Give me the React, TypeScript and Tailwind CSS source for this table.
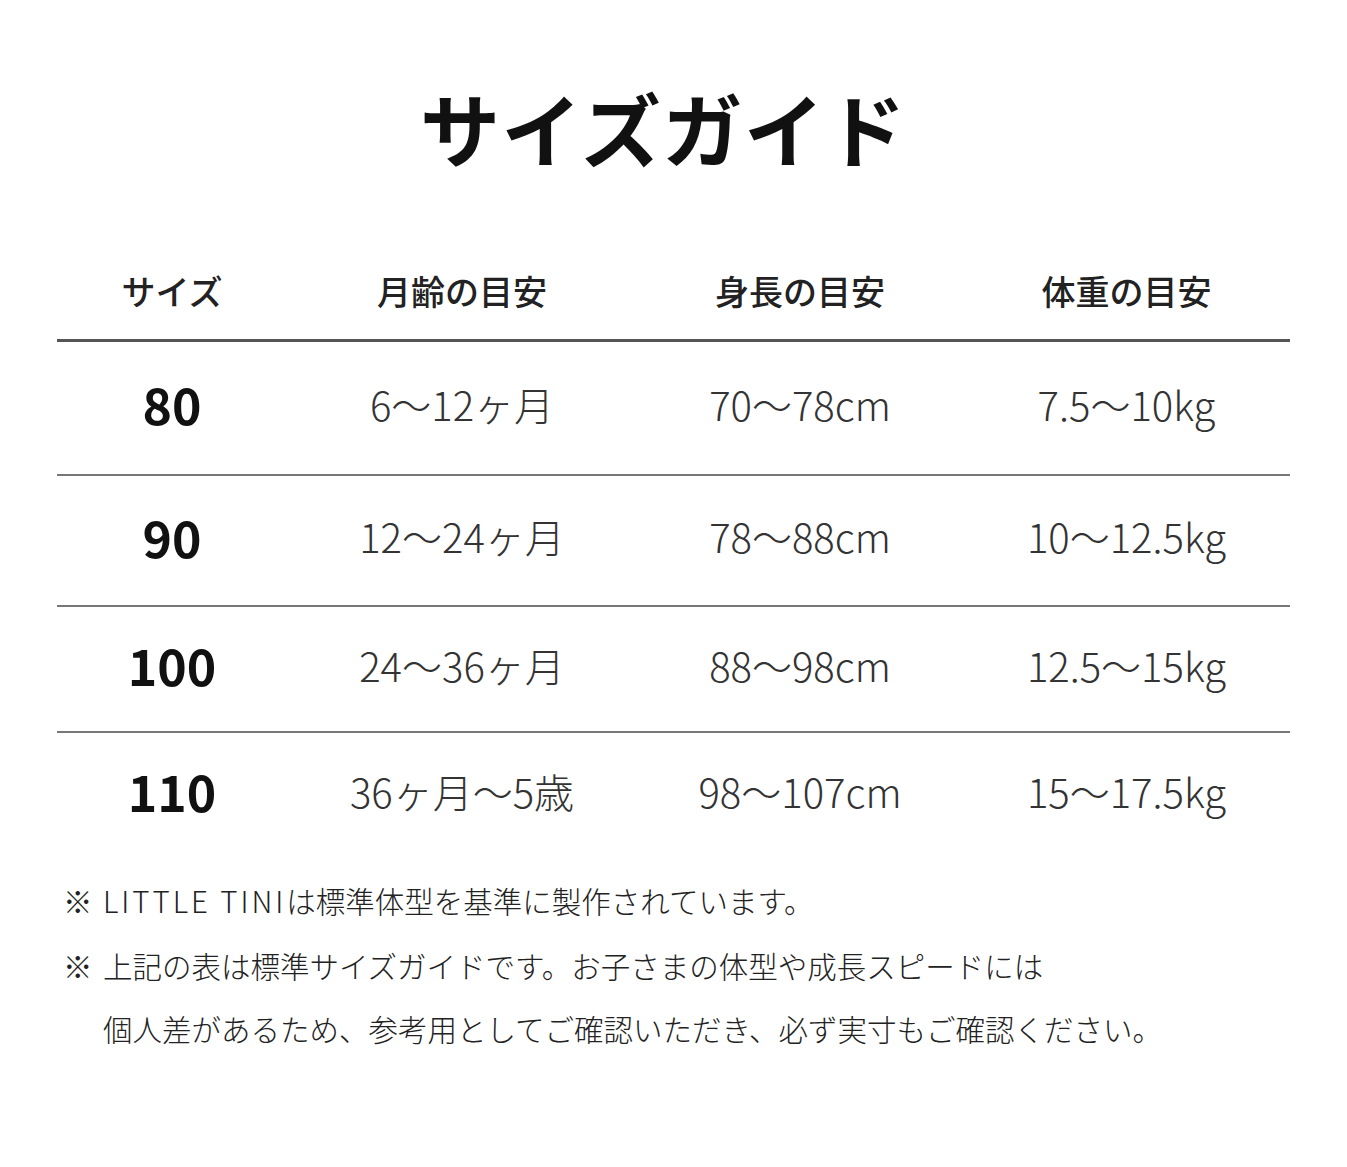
import React from "react";

const rows = [
  { size: "80", age: "6〜12ヶ月", height: "70〜78cm", weight: "7.5〜10kg", h: "h-[134px]", border: true },
  { size: "90", age: "12〜24ヶ月", height: "78〜88cm", weight: "10〜12.5kg", h: "h-[131px]", border: true },
  { size: "100", age: "24〜36ヶ月", height: "88〜98cm", weight: "12.5〜15kg", h: "h-[126px]", border: true },
  { size: "110", age: "36ヶ月〜5歳", height: "98〜107cm", weight: "15〜17.5kg", h: "h-[124px]", border: false },
];

export default function App() {
  return (
    <div
      className="w-[1347px] h-[1167px] bg-white text-[#1a1a1a]"
      style={{ fontFamily: '"Noto Sans CJK JP", "Noto Sans", sans-serif' }}
    >
      <h1 className="pt-[86px] pr-[20px] h-[170px] text-center text-[80px] leading-[80px] font-bold tracking-[0.02em] text-[#111]">
        サイズガイド
      </h1>
      <div className="mx-[57px] mt-[84px]">
        <div className="grid grid-cols-[230px_350px_326px_327px] h-[88px] pb-[12px] items-center border-b-[3px] border-[#555] text-[34px] font-medium text-[#222]">
          <div className="text-center">サイズ</div>
          <div className="text-center">月齢の目安</div>
          <div className="text-center">身長の目安</div>
          <div className="text-center">体重の目安</div>
        </div>
        {rows.map((r) => (
          <div
            key={r.size}
            className={`grid grid-cols-[230px_350px_326px_327px] items-center pb-[9px] ${r.h} ${r.border ? "border-b-2 border-[#777]" : ""}`}
          >
            <div className="text-center text-[50px] font-semibold text-[#111]">{r.size}</div>
            <div className="text-center text-[40px] font-light text-[#333]">{r.age}</div>
            <div className="text-center text-[40px] font-light text-[#333]">{r.height}</div>
            <div className="text-center text-[40px] font-light text-[#333]">{r.weight}</div>
          </div>
        ))}
      </div>
      <div className="ml-[63px] mt-[12px] text-[29.5px] leading-[63px] font-light text-[#222]">
        <div className="flex">
          <span className="w-[40px] shrink-0">※</span>
          <span>
            <span className="tracking-[0.1em]">LITTLE TINI</span>は標準体型を基準に製作されています。
          </span>
        </div>
        <div className="flex mt-[2px]">
          <span className="w-[40px] shrink-0">※</span>
          <span>
            上記の表は標準サイズガイドです。お子さまの体型や成長スピードには
            <br />
            個人差があるため、参考用としてご確認いただき、必ず実寸もご確認ください。
          </span>
        </div>
      </div>
    </div>
  );
}
